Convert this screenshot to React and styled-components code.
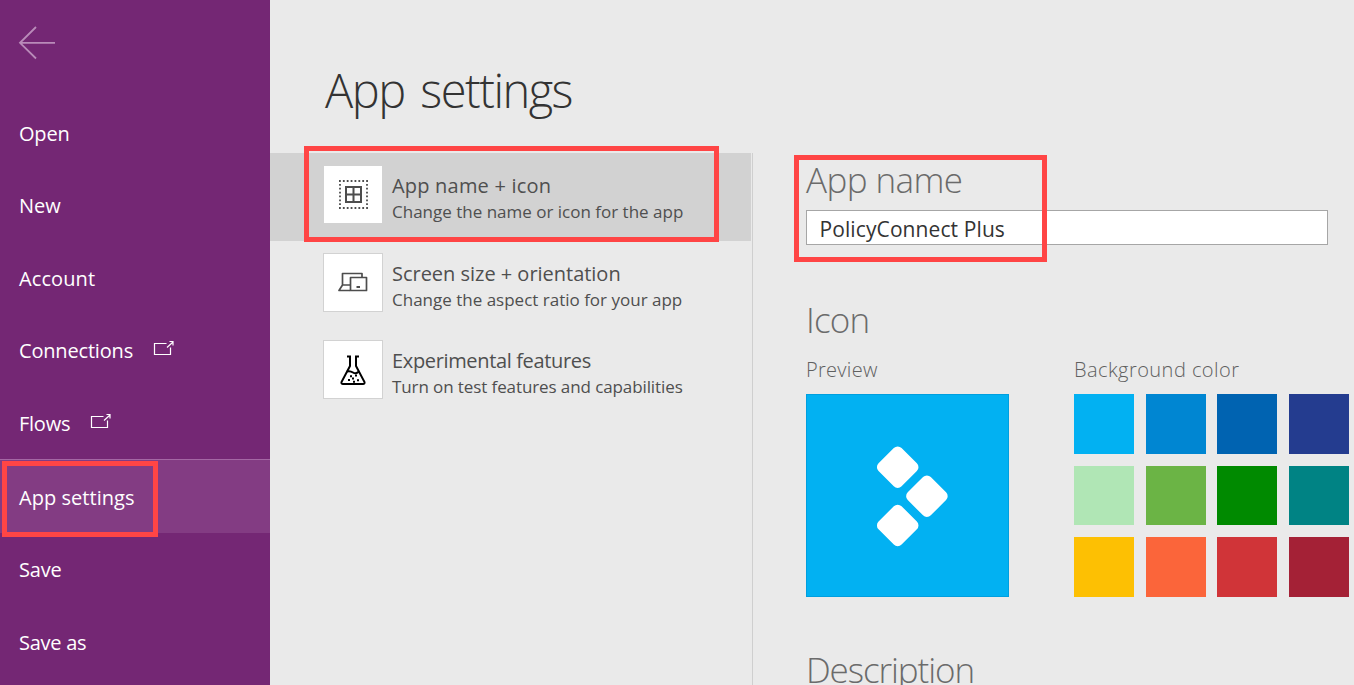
import React from 'react';
import styled, { createGlobalStyle } from 'styled-components';

const GlobalStyle = createGlobalStyle`
  * { box-sizing: border-box; }
  body {
    margin: 0;
    overflow: hidden;
    background: #eaeaea;
    font-family: 'Segoe UI', 'Open Sans', 'Noto Sans', sans-serif;
  }
`;

const Page = styled.div`
  position: relative;
  display: flex;
  width: 1354px;
  height: 685px;
  overflow: hidden;
  background: #eaeaea;
`;

const Sidebar = styled.aside`
  flex: 0 0 270px;
  background: #742774;
  color: #fff;
`;

const BackButton = styled.div`
  height: 96.8px;
  padding: 25px 0 0 18px;
  svg { display: block; }
`;

const NavItem = styled.div`
  display: flex;
  align-items: center;
  height: ${(p) => (p.$active ? '74px' : '72.5px')};
  padding: ${(p) => (p.$active ? '2px' : '1px')} 0 0 19px;
  background: ${(p) => (p.$active ? '#833c83' : 'transparent')};
  border-top: ${(p) => (p.$active ? '1px solid #a467a4' : '0')};
  font-size: 20px;
  line-height: 28px;
  letter-spacing: ${(p) => p.$spacing || 0}px;
  white-space: nowrap;
  svg { margin: -5px 0 0 20px; }
`;

const Main = styled.main`
  flex: 1;
  min-width: 0;
  display: flex;
  flex-direction: column;
`;

const Title = styled.h1`
  flex: none;
  margin: 0;
  height: 153px;
  padding: 57px 0 0 55px;
  font-size: 47px;
  line-height: 66px;
  font-weight: 300;
  color: #333;
  letter-spacing: ${(p) => p.$spacing}px;
  word-spacing: 5px;
`;

const Columns = styled.div`
  flex: 1;
  min-height: 0;
  display: flex;
`;

const SettingsList = styled.section`
  flex: 0 0 483px;
  border-right: 1px solid #cfcfcf;
`;

const SettingRow = styled.div`
  display: flex;
  height: 87.5px;
  width: 481px;
  padding: 12px 0 0 53px;
  background: ${(p) => (p.$active ? '#d2d2d2' : 'transparent')};
`;

const IconTile = styled.div`
  flex: none;
  display: flex;
  align-items: center;
  justify-content: center;
  width: 60px;
  height: 59px;
  background: #fff;
  border: 1px solid #d2d2d2;
`;

const SettingText = styled.div`
  margin-left: 9px;
  padding-top: 7px;
  color: #4f4f4f;
  white-space: nowrap;
`;

const SettingName = styled.div`
  font-size: 20px;
  line-height: 28px;
  letter-spacing: ${(p) => p.$spacing}px;
`;

const SettingHint = styled.div`
  font-size: 17px;
  line-height: 24px;
  letter-spacing: ${(p) => p.$spacing}px;
`;

const Details = styled.section`
  flex: 1;
  min-width: 0;
  padding-left: 53px;
`;

const Heading = styled.h2`
  margin: 0;
  font-size: 35px;
  line-height: 48px;
  height: 48px;
  margin-top: ${(p) => p.$top}px;
  font-weight: 300;
  color: #6b6b6b;
  letter-spacing: ${(p) => p.$spacing}px;
`;

const NameInput = styled.div`
  width: 522px;
  height: 35px;
  margin-top: 6px;
  padding: 4px 0 0 12.5px;
  background: #fff;
  border: 1px solid #a6a6a6;
  color: #333;
  font-size: 21px;
  line-height: 28px;
  letter-spacing: ${(p) => p.$spacing}px;
`;

const IconColumns = styled.div`
  display: flex;
  margin-top: 11px;
`;

const PreviewColumn = styled.div`
  width: 268px;
`;

const SubLabel = styled.div`
  height: 39px;
  font-size: 20px;
  line-height: 30px;
  font-weight: 300;
  color: #606060;
  white-space: nowrap;
  letter-spacing: ${(p) => p.$spacing}px;
`;

const Preview = styled.div`
  display: flex;
  width: 203px;
  height: 203px;
  background: #02b1f2;
  border: 1px solid #009fdf;
`;

const Palette = styled.div`
  display: grid;
  grid-template-columns: repeat(4, 60px);
  grid-auto-rows: 59.6px;
  column-gap: 11.6px;
  row-gap: 12px;
`;

const Swatch = styled.div`
  background: ${(p) => p.$color};
`;

const Highlight = styled.div`
  position: absolute;
  left: ${(p) => p.$x}px;
  top: ${(p) => p.$y}px;
  width: ${(p) => p.$w}px;
  height: ${(p) => p.$h}px;
  border: 5px solid #ff4545;
  pointer-events: none;
`;

const ExternalIcon = () => (
  <svg width="22" height="17" viewBox="0 0 22 17" fill="none" stroke="#fff" strokeWidth="1.2">
    <path d="M13.5 3.5H1.5V14.5H17.5V7.5" />
    <path d="M14 7.5L20 2M16.5 1.5H20V5.5" />
  </svg>
);

const GridIcon = () => (
  <svg width="29" height="29" viewBox="0 0 29 29" fill="none" stroke="#4d4d4d">
    <path d="M0 1H29M0 28H29" strokeWidth="1.8" strokeDasharray="1.8 2.08" />
    <path d="M1 3.88V27M28 3.88V27" strokeWidth="1.8" strokeDasharray="1.8 2.08" />
    <path d="M7 7H22V22H7ZM14.5 7V22M7 14.5H22" strokeWidth="2" />
  </svg>
);

const DevicesIcon = () => (
  <svg width="30" height="20" viewBox="0 0 30 20" fill="none" stroke="#4d4d4d" strokeWidth="1.7" strokeLinejoin="round">
    <path d="M4.5 13V1.5H24V5M12 13H4.5L1 18.5H12" />
    <path d="M12.5 5.5H28.5V18.5H12.5Z" />
    <path d="M18.5 15H22" strokeWidth="2" />
  </svg>
);

const FlaskIcon = () => (
  <svg width="26" height="30" viewBox="0 0 26 30" fill="none" stroke="#000" strokeWidth="2">
    <path d="M7 1.5H11M15 1.5H19M10 1V11L1.5 27Q1 29 3 29H23Q25 29 24.5 27L16 11V1" />
    <path d="M7 16.5Q10 15.5 13 17.5T19 16.5" />
    <path d="M10 21.2H12M15 20.5H17M8 25H10M12 23.5H14M17 25.2H19M13 26.8H15" />
  </svg>
);

const AppLogo = () => (
  <svg width="201" height="201" viewBox="0 0 201 201" fill="#fff">
    {[[90.7, 72.2], [119.9, 101.2], [90.7, 130.4]].map(([x, y]) => (
      <rect key={y} x={x - 16.3} y={y - 16.3} width="32.6" height="32.6" rx="5.5" transform={`rotate(45 ${x} ${y})`} />
    ))}
  </svg>
);

const navItems = [
  { label: 'Open', spacing: -0.2 },
  { label: 'New', spacing: 0 },
  { label: 'Account', spacing: 0.1 },
  { label: 'Connections', spacing: -0.18, external: true },
  { label: 'Flows', spacing: -0.25, external: true },
  { label: 'App settings', spacing: 0.04, active: true },
  { label: 'Save', spacing: -0.15 },
  { label: 'Save as', spacing: -0.25 },
];

const settings = [
  { name: 'App name + icon', hint: 'Change the name or icon for the app', Icon: GridIcon, ns: 0.2, hs: 0, active: true },
  { name: 'Screen size + orientation', hint: 'Change the aspect ratio for your app', Icon: DevicesIcon, ns: -0.02, hs: 0 },
  { name: 'Experimental features', hint: 'Turn on test features and capabilities', Icon: FlaskIcon, ns: -0.35, hs: -0.1 },
];

const colors = [
  '#02b1f2', '#0086d2', '#0063b1', '#243c8f',
  '#b0e6b5', '#6bb445', '#008a00', '#008384',
  '#fdc003', '#fb653a', '#d03438', '#a42136',
];

export default function App() {
  return (
    <>
      <GlobalStyle />
      <Page>
        <Sidebar>
          <BackButton>
            <svg width="38" height="36" viewBox="0 0 38 36" fill="none" stroke="#b98bb9" strokeWidth="1.8">
              <path d="M37 17.8H2M18 2L2 17.8L18 33.5" />
            </svg>
          </BackButton>
          {navItems.map((n) => (
            <NavItem key={n.label} $active={n.active} $spacing={n.spacing}>
              <span>{n.label}</span>
              {n.external && <ExternalIcon />}
            </NavItem>
          ))}
        </Sidebar>
        <Main>
          <Title $spacing={-1.52}>App settings</Title>
          <Columns>
            <SettingsList>
              {settings.map(({ name, hint, Icon, ns, hs, active }) => (
                <SettingRow key={name} $active={active}>
                  <IconTile><Icon /></IconTile>
                  <SettingText>
                    <SettingName $spacing={ns}>{name}</SettingName>
                    <SettingHint $spacing={hs}>{hint}</SettingHint>
                  </SettingText>
                </SettingRow>
              ))}
            </SettingsList>
            <Details>
              <Heading $top={3} $spacing={-0.6}>App name</Heading>
              <NameInput $spacing={0.1}>PolicyConnect Plus</NameInput>
              <Heading $top={51} $spacing={-0.8}>Icon</Heading>
              <IconColumns>
                <PreviewColumn>
                  <SubLabel $spacing={0.3}>Preview</SubLabel>
                  <Preview><AppLogo /></Preview>
                </PreviewColumn>
                <div>
                  <SubLabel $spacing={0.45}>Background color</SubLabel>
                  <Palette>
                    {colors.map((c) => <Swatch key={c} $color={c} />)}
                  </Palette>
                </div>
              </IconColumns>
              <Heading $top={49} $spacing={-1.1}>Description</Heading>
            </Details>
          </Columns>
        </Main>
        <Highlight $x={304} $y={146} $w={415} $h={96} />
        <Highlight $x={794} $y={155} $w={253} $h={107} />
        <Highlight $x={2} $y={461} $w={156} $h={76} />
      </Page>
    </>
  );
}
